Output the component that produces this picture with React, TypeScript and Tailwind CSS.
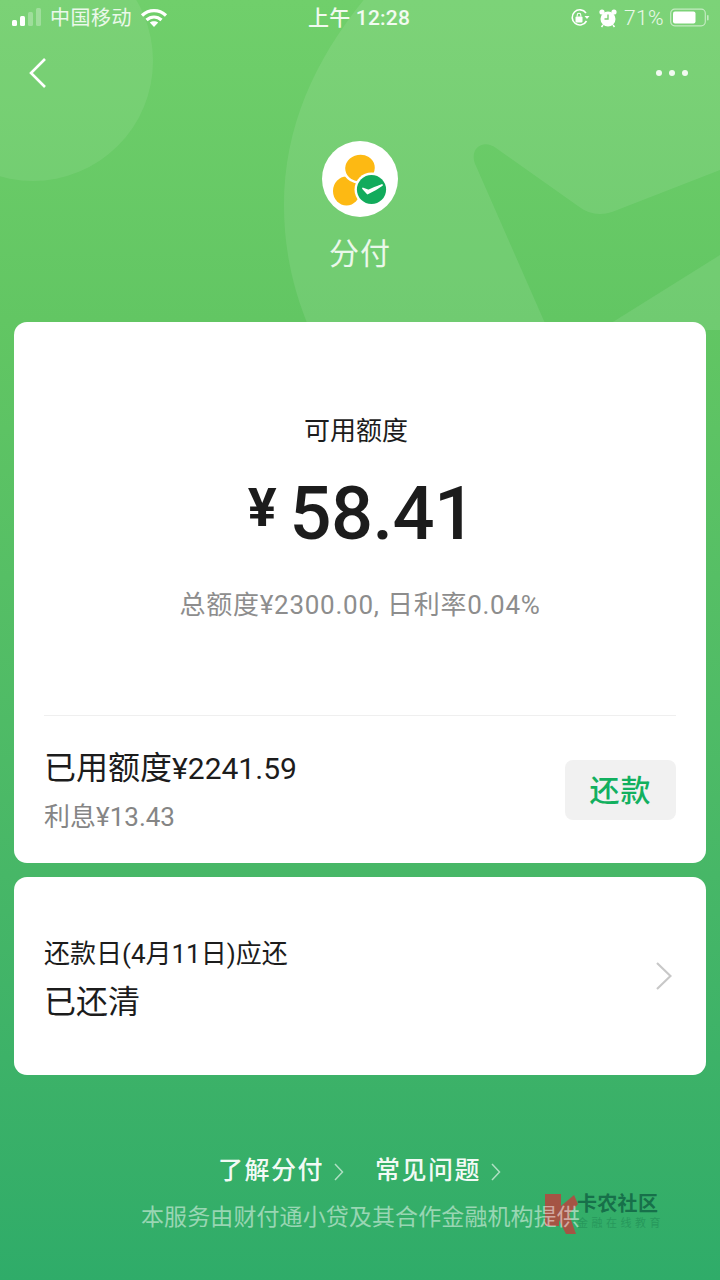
import React from "react";

const font = { fontFamily: 'Roboto, "Noto Sans CJK SC", sans-serif' };

function Background() {
  return (
    <svg className="absolute left-0 top-0" width="720" height="330" viewBox="0 0 720 330" fill="none">
      <circle cx="33" cy="61" r="120" fill="#ffffff" fillOpacity="0.08" />
      <path
        fillRule="evenodd"
        d="M720 -40 L400 -40 C330 30 284 110 284 205 C284 250 293 290 310 330 L548 330 L476 166 C468 150 482 138 496 148 L578 206 C588 214 600 216 612 212 L720 170 L720 255 L600 330 L720 330 Z"
        fill="#ffffff"
        fillOpacity="0.09"
      />
    </svg>
  );
}

function StatusBar() {
  return (
    <div className="relative flex h-[36px] items-center justify-between pl-[12px] pr-[10px] text-[20px] leading-none text-white/85">
      <div className="flex w-[250px] items-center">
        <svg width="30" height="20" viewBox="0 0 30 20" className="mr-[8px]">
          <rect x="0" y="12" width="5" height="6" rx="1.5" fill="#fff" />
          <rect x="8" y="8" width="5" height="10" rx="1.5" fill="#fff" />
          <rect x="16" y="4" width="5" height="14" rx="1.5" fill="#fff" fillOpacity="0.28" />
          <rect x="24" y="0" width="5" height="18" rx="1.5" fill="#fff" fillOpacity="0.28" />
        </svg>
        <span className="tracking-[0.5px]">中国移动</span>
        <svg width="28" height="20" viewBox="0 0 28 20" className="ml-[8px]" fill="none" stroke="#fff" strokeWidth="3.2">
          <path d="M2 7.5 C9 1 19 1 26 7.5" />
          <path d="M6.5 12 C11 8 17 8 21.5 12" />
          <path d="M14 19 L9.8 14.6 C12 12.8 16 12.8 18.2 14.6 Z" fill="#fff" stroke="none" />
        </svg>
      </div>
      <span className="absolute left-[308px] top-[8px] text-[21px] font-medium tracking-[0.2px] text-white/90">上午 12:28</span>
      <div className="flex items-center">
        <svg width="20" height="20" viewBox="0 0 20 20" fill="none" className="mr-[9px]">
          <path d="M16.5 13 A7.6 7.6 0 1 1 16 5" stroke="#fff" strokeWidth="1.6" />
          <path d="M14.5 8 L19.5 8 L17 11 Z" fill="#fff" />
          <rect x="5.5" y="8.5" width="7" height="6" rx="1" fill="#fff" />
          <path d="M7.2 8.5 V7 a1.8 1.8 0 0 1 3.6 0 V8.5" stroke="#fff" strokeWidth="1.1" />
        </svg>
        <svg width="18" height="20" viewBox="0 0 18 20" fill="none" className="mr-[7px]">
          <circle cx="9" cy="11" r="7.5" fill="#fff" />
          <circle cx="3" cy="4" r="2.6" fill="#fff" />
          <circle cx="15" cy="4" r="2.6" fill="#fff" />
          <path d="M9 6.5 V11 H5.5" stroke="#7ccf73" strokeWidth="1.4" />
          <path d="M4 17 L2.5 19 M14 17 L15.5 19" stroke="#fff" strokeWidth="1.6" />
        </svg>
        <span className="mr-[6px] text-[21px] font-light tracking-[0.4px]">71%</span>
        <svg width="40" height="20" viewBox="0 0 40 20" fill="none">
          <rect x="0.7" y="1.2" width="34.6" height="16.6" rx="4" stroke="#fff" strokeOpacity="0.55" strokeWidth="1.2" />
          <rect x="3" y="3.5" width="22.5" height="12" rx="2" fill="#fff" />
          <rect x="37" y="7" width="1.6" height="5.5" rx="0.8" fill="#fff" fillOpacity="0.55" />
        </svg>
      </div>
    </div>
  );
}

function Logo() {
  return (
    <div className="flex h-[76px] w-[76px] items-center justify-center rounded-full bg-white">
      <svg width="76" height="76" viewBox="0 0 76 76">
        <ellipse cx="24.5" cy="50" rx="13.5" ry="14.5" fill="#fdb913" />
        <ellipse cx="38" cy="27" rx="16" ry="14.5" fill="#fdb913" stroke="#fff" strokeWidth="2.4" transform="rotate(-10 38 27)" />
        <circle cx="49.5" cy="48.5" r="17" fill="#fff" />
        <circle cx="49.5" cy="48.5" r="14.6" fill="#12ab5c" />
        <path d="M41 47.5 L45.5 52.5 C51 50 56 47 60 44 C55 45.5 50 48 46.5 49.5 Z" fill="#fff" stroke="#fff" strokeWidth="1.8" strokeLinejoin="round" />
      </svg>
    </div>
  );
}

function Chevron({ className, color = "#ffffff", w = 10, h = 18, sw = 1.5 }: { className?: string; color?: string; w?: number; h?: number; sw?: number }) {
  return (
    <svg className={className} width={w} height={h} viewBox={`0 0 ${w} ${h}`} fill="none" stroke={color} strokeWidth={sw}>
      <path d={`M1 1 L${w - 1.5} ${h / 2} L1 ${h - 1}`} />
    </svg>
  );
}

export default function App() {
  return (
    <div
      className="relative h-[1280px] w-[720px] overflow-hidden bg-gradient-to-b from-[#70cf6b] via-[#62c663] via-25% to-[#2fac69]"
      style={font}
    >
      <Background />
      <StatusBar />

      <div className="relative flex h-[74px] items-center justify-between pl-[28px] pr-[32px]">
        <svg width="20" height="32" viewBox="0 0 20 32" fill="none" stroke="#fff" strokeWidth="2.6">
          <path d="M17 2 L3 16 L17 30" />
        </svg>
        <div className="flex gap-[7px]">
          <span className="h-[6px] w-[6px] rounded-full bg-white/90" />
          <span className="h-[6px] w-[6px] rounded-full bg-white/90" />
          <span className="h-[6px] w-[6px] rounded-full bg-white/90" />
        </div>
      </div>

      <div className="relative mt-[31px] flex flex-col items-center">
        <Logo />
        <div className="mt-[13px] h-[48px] text-[30px] leading-[48px] tracking-[1px] text-white/85">分付</div>
      </div>

      <div className="relative mx-[14px] mt-[44px] h-[541px] rounded-[13px] bg-white">
        <div className="flex flex-col items-center pt-[90px]">
          <div className="pr-[8px] text-[26px] leading-[38px] text-[#1c1c1c]">可用额度</div>
          <div className="mt-[22px] flex h-[84px] items-center pl-[3px] text-[#1c1c1c]">
            <span className="mr-[13px] -translate-y-[6px] text-[54px] font-bold leading-none">¥</span>
            <span className="text-[74px] font-medium leading-none tracking-[-0.6px]">58.41</span>
          </div>
          <div className="mt-[30px] text-[26px] leading-[38px] tracking-[0.75px] text-[#8d8d8d]">总额度¥2300.00, 日利率0.04%</div>
        </div>
        <div className="absolute inset-x-[30px] top-[393px] h-px bg-[#efefef]" />
        <div className="absolute inset-x-[30px] top-[425px] flex items-start justify-between">
          <div>
            <div className="mt-[1px] text-[30px] leading-[40px] text-[#1c1c1c]">
              <span className="text-[32px]">已用额度</span>¥2241.59
            </div>
            <div className="mt-[13px] text-[26px] leading-[30px] text-[#858585]">利息¥13.43</div>
          </div>
          <div className="mt-[13px] flex h-[60px] w-[111px] items-center justify-center rounded-[8px] bg-[#f1f1f1] text-[30px] font-medium tracking-[1px] text-[#12b05f]">还款</div>
        </div>
      </div>

      <div className="relative mx-[14px] mt-[14px] flex h-[198px] items-center justify-between rounded-[13px] bg-white pl-[30px] pr-[34px]">
        <div className="mt-[7px]">
          <div className="text-[26px] leading-[38px] text-[#1c1c1c]">还款日(4月11日)应还</div>
          <div className="mt-[7px] text-[32px] leading-[44px] text-[#1c1c1c]">已还清</div>
        </div>
        <Chevron color="#c8c8c8" w={16} h={28} sw={2.2} />
      </div>

      <div className="absolute left-[544px] top-[1192px] flex items-start">
        <svg width="40" height="46" viewBox="0 0 40 46">
          <path d="M1 2 H17 V14 L30 3 L34 12 L25 22 L32 42 L22 42 L15 28 V34 H1 Z" fill="#b8443e" fillOpacity="0.85" />
        </svg>
        <div className="-ml-[7px] flex flex-col">
          <span className="text-[20px] font-bold leading-[24px] tracking-[0.3px] text-[#17704a]">卡农社区</span>
          <span className="mt-[1px] text-[11px] leading-[14px] tracking-[3.5px] text-[#27985c]">金融在线教育</span>
        </div>
      </div>

      <div className="relative mt-[78px] flex items-center pl-[218px] text-[25px] font-medium leading-[36px] text-white/95">
        <span className="tracking-[1.5px]">了解分付</span>
        <Chevron className="ml-[10px] mt-[2px]" color="#ffffff99" w={10} h={18} />
        <span className="ml-[31px] tracking-[1.5px]">常见问题</span>
        <Chevron className="ml-[10px] mt-[2px]" color="#ffffff99" w={10} h={18} />
      </div>
      <div className="relative mt-[11px] pl-[141px] text-[23px] leading-[36px] tracking-[0.1px] text-white/50">
        本服务由财付通小贷及其合作金融机构提供
      </div>
    </div>
  );
}
